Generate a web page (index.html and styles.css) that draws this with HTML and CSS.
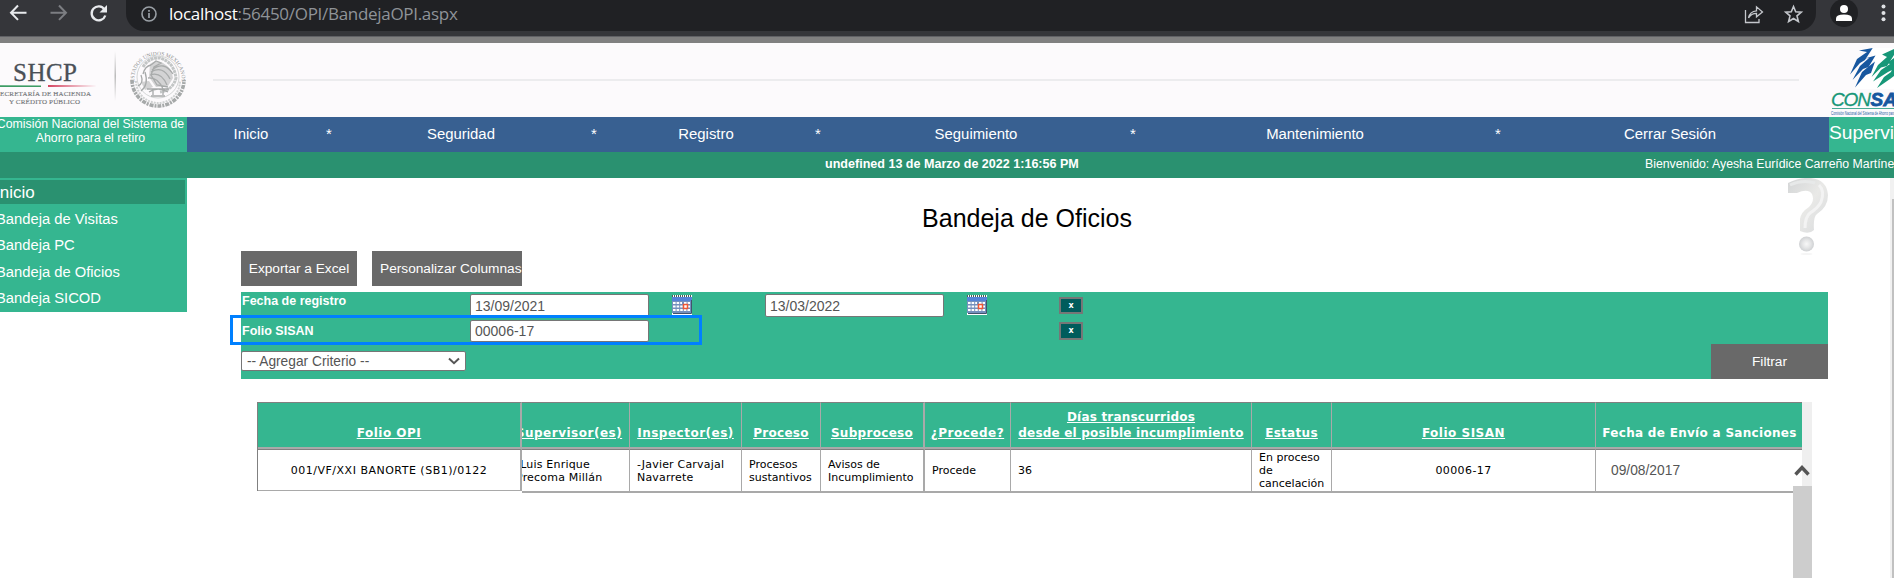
FILE: index.html
```html
<!DOCTYPE html>
<html lang="es">
<head>
<meta charset="utf-8">
<title>Bandeja de Oficios</title>
<link rel="stylesheet" href="styles.css">
</head>
<body>
<div class="browser">
  <svg class="nav-icons" width="126" height="36" viewBox="0 0 126 36" fill="none" stroke-width="2">
    <path d="M26.500 12.700H11.500M18 5.500L11 12.700L18 19.900" stroke="#e8eaed"/>
    <path d="M50.500 12.700H65.500M59 5.500L66 12.700L59 19.900" stroke="#7c7e82"/>
    <path d="M104.500 9.500A7 7 0 1 0 105.300 15.500" stroke="#e8eaed" stroke-width="2.300"/>
    <path d="M107 5V12.500H99.500Z" fill="#e8eaed"/>
  </svg>
  <div class="address">
    <svg class="info" width="16" height="16" viewBox="0 0 16 16"><circle cx="8" cy="8" r="7" fill="none" stroke="#9aa0a6" stroke-width="1.600"/><path d="M8 7V12M8 4V5.700" stroke="#9aa0a6" stroke-width="1.700"/></svg>
    <span class="url"><b>localhost</b>:56450/OPI/BandejaOPI.aspx</span>
    <svg class="page-actions" width="60" height="20" viewBox="0 0 60 20" fill="none" stroke="#c4c7cc" stroke-width="1.300">
      <path d="M1.500 6V18.500H15V15M4.500 14C5.500 9 9 7 12.500 6.800V2.800L18.500 8L12.500 12.800V9.300C9 9.300 6.500 10.500 4.500 14Z"/>
      <path d="M49.500 2.500L51.700 7.700L57.300 8.200L53 11.900L54.400 17.500L49.500 14.500L44.600 17.500L46 11.900L41.700 8.200L47.300 7.700Z" stroke-width="1.600"/>
    </svg>
  </div>
  <svg class="profile" width="64" height="36" viewBox="0 0 64 36"><circle cx="14" cy="13" r="14" fill="#202124"/><circle cx="14" cy="9" r="4" fill="#fff"/><path d="M6 21V18.500Q6 14.500 14 14.500T22 18.500V21Z" fill="#fff"/><g fill="#dfe1e4"><circle cx="53.500" cy="6.500" r="2"/><circle cx="53.500" cy="13" r="2"/><circle cx="53.500" cy="19.300" r="2"/></g></svg>
</div>
<header class="banner">
  <svg class="shcp" width="200" height="74" viewBox="0 0 200 74">
    <defs>
      <path id="ring" d="M134.500 39A23.700 23.700 0 1 1 181.500 39"/>
      <linearGradient id="fade" x1="0" y1="0" x2="0" y2="1"><stop offset="0" stop-color="#fcfafc"/><stop offset=".5" stop-color="#bbb"/><stop offset="1" stop-color="#fcfafc"/></linearGradient>
    </defs>
    <text class="shcp-name" x="13" y="38" textLength="64">SHCP</text>
    <path d="M0 42.300L41 42.600V43.900H0Z" fill="#3d9c64"/><path d="M48 42.100L97 43L48 44Z" fill="#d54561"/>
    <text class="shcp-sub" x="-4" y="53" textLength="95">SECRETARÍA DE HACIENDA</text>
    <text class="shcp-sub" x="9" y="61" textLength="71">Y CRÉDITO PÚBLICO</text>
    <rect x="114.500" y="8" width="1.500" height="50" fill="url(#fade)"/>
    <text class="seal-text"><textPath href="#ring" textLength="80">ESTADOS UNIDOS MEXICANOS</textPath></text>
    <g fill="none" stroke="#a6a9a9">
      <path d="M132 37A26 26 0 0 0 184 37" stroke-width="3.600" stroke-dasharray="4 1 2 1"/>
      <path d="M136 38A22 22 0 0 0 180 38" stroke="#d0d2d2" stroke-width="2" stroke-dasharray="2 1"/>
      <circle cx="158" cy="34" r="21" stroke="#d3d5d5"/>
      <path d="M143 24Q149 14 160 15Q174 19 176 35Q173 47 160 49" stroke="#c3c6c6" stroke-width="3" stroke-dasharray="3 .6"/>
      <path d="M151 22Q145 23 143 31M152 27Q164 17 173 31M151 29Q163 22 170 36M150 32Q161 28 167 42M148 35Q158 34 163 46M151 22L156 18L161 20L154 24L151 32L157 42L168 44" stroke-width="1.300"/>
      <path d="M141 32Q144 40 138 43M145 29Q149 42 141 48M147 46H169M149 49Q158 43 168 49M151 53H165M153 46V52M163 46V52" stroke-width="1.300"/>
    </g>
    <path d="M150 21Q156 16 163 20Q172 25 173 35L168 43L156 44L149 34ZM141 39L149 38L153 44L145 47Z" fill="#a9acac" opacity=".5"/>
  </svg>
  <div class="rule"></div>
  <svg class="consar" width="64" height="74" viewBox="0 0 64 74">
    <path d="M40 5H64V46H25L44 18Z" fill="#fff"/>
    <g fill="#17579f"><path d="M29 7.500L42.700 5L35 17L30 20L20 31.500L27 16L37 9Z"/><path d="M35 15.500L45.500 12.500L38.500 24L33 26L22.500 37L30 23L39 15Z"/><path d="M38 24L45 18.500L41 30L36 32L25 44.500L32 29Z"/></g>
    <g fill="#179778"><path d="M52 11.500L64 6V12L57 23L51 24.500L41.500 34L48 22L57 14Z"/><path d="M57 20L64 15V26L58 29L43 38.500L51 27L60 21Z"/><path d="M62 26L64 25V33L60 36L47 45L54 34L61 29Z"/></g>
    <text class="consar-name" x="1" y="63" textLength="40">CON</text><text class="consar-name dark" x="40.500" y="63">SA</text>
    <path d="M2 65.500H64" stroke="#48aa94"/>
    <text class="consar-sub" x="1" y="71.500" textLength="64" lengthAdjust="spacingAndGlyphs">Comisión Nacional del Sistema de Ahorro para</text>
  </svg>
</header>
<nav class="menu">
  <div class="agency"><span>Comisión Nacional del Sistema de</span><span>Ahorro para el retiro</span></div>
  <a>Inicio</a><i>*</i><a>Seguridad</a><i>*</i><a>Registro</a><i>*</i><a>Seguimiento</a><i>*</i><a>Mantenimiento</a><i>*</i><a>Cerrar Sesión</a>
  <div class="role">Supervi</div>
</nav>
<div class="status"><b>undefined 13 de Marzo de 2022 1:16:56 PM</b><span>Bienvenido: Ayesha Eurídice Carreño Martíne</span></div>
<div class="page">
  <aside class="side"><div class="side-title">Inicio</div><a>Bandeja de Visitas</a><a>Bandeja PC</a><a>Bandeja de Oficios</a><a>Bandeja SICOD</a></aside>
  <main class="main">
    <div class="title-row">
      <h1>Bandeja de Oficios</h1>
      <svg class="help" width="42" height="78" viewBox="0 0 42 78">
        <defs><linearGradient id="silver" x1="0" x2="1" y1="0" y2="1"><stop offset="0" stop-color="#d3d5d6"/><stop offset=".5" stop-color="#e9e9e7"/><stop offset="1" stop-color="#d8dadc"/></linearGradient><radialGradient id="ball"><stop offset="0" stop-color="#f8f8f8"/><stop offset=".55" stop-color="#e4e5e6"/><stop offset="1" stop-color="#cfd1d3"/></radialGradient></defs>
        <path d="M1 5Q14-1 24 0Q40 2 41 17Q41 29 30 36Q26 39 27 52Q22 57 13 53V41Q14 34 22 29Q28 23 25 16Q21 10 10 15L1 15Z" fill="url(#silver)"/>
        <path d="M32 7Q38 13 34 24Q31 30 23 35Q18 39 18 50" fill="none" stroke="#f3f3f3" stroke-width="3"/>
        <path d="M3 7Q16 1 28 5" fill="none" stroke="#e7e9e9" stroke-width="3"/>
        <circle cx="19.500" cy="66" r="7.500" fill="url(#ball)"/>
        <ellipse cx="19.500" cy="76" rx="6" ry="1" fill="#f5f5f5"/>
      </svg>
    </div>
    <div class="toolbar"><button class="grey">Exportar a Excel</button><button class="grey wide">Personalizar Columnas</button></div>
    <section class="filters">
      <div class="criterion dates">
        <label>Fecha de registro</label><input class="field" value="13/09/2021">
        <svg class="cal" width="20" height="20" viewBox="0 0 20 20"><path fill="#fff" d="M0 0H20V20H0Z"/><path fill="#5483d8" d="M0 2H20V6H0Z"/><path d="M0 1H20" stroke="#4e5d54" stroke-width="2" stroke-dasharray="1 1"/><path fill="#7490bd" d="M0 6H19V18H0Z"/><path d="M1 8H10M1 11.500H18M1 15H18M12 8H18" stroke="#fff" stroke-width="2.200" stroke-dasharray="2.600 1"/><path d="M11.500 9.500H15.500V13.500H11.500Z" stroke="#ef5735" stroke-width="1.500" fill="#fff"/><path d="M19.500 5V18.500H1" fill="none" stroke="#42536c"/></svg>
        <input class="field" value="13/03/2022">
        <svg class="cal" width="20" height="20" viewBox="0 0 20 20"><path fill="#fff" d="M0 0H20V20H0Z"/><path fill="#5483d8" d="M0 2H20V6H0Z"/><path d="M0 1H20" stroke="#4e5d54" stroke-width="2" stroke-dasharray="1 1"/><path fill="#7490bd" d="M0 6H19V18H0Z"/><path d="M1 8H10M1 11.500H18M1 15H18M12 8H18" stroke="#fff" stroke-width="2.200" stroke-dasharray="2.600 1"/><path d="M11.500 9.500H15.500V13.500H11.500Z" stroke="#ef5735" stroke-width="1.500" fill="#fff"/><path d="M19.500 5V18.500H1" fill="none" stroke="#42536c"/></svg>
        <button class="remove">x</button>
      </div>
      <div class="criterion folio"><label>Folio SISAN</label><input class="field" value="00006-17"><button class="remove">x</button></div>
      <div class="add-row">
        <div class="select">-- Agregar Criterio --<svg width="12" height="8" viewBox="0 0 12 8"><path d="M1 1.500L6 6.200L11 1.500" fill="none" stroke="#555" stroke-width="2"/></svg></div>
        <button class="grey filter">Filtrar</button>
      </div>
      <div class="highlight"></div>
    </section>
    <section class="grid">
      <table class="frozen"><tr><th class="wider"><u>Folio OPI</u></th></tr><tr><td>001/VF/XXI BANORTE (SB1)/0122</td></tr></table>
      <div class="scroller">
        <table class="data">
          <colgroup><col class="c1"><col class="c2"><col class="c3"><col class="c4"><col class="c5"><col class="c6"><col class="c7"><col class="c8"><col class="c9"></colgroup>
          <tr><th class="wider"><u>Supervisor(es)</u></th><th class="wider"><u>Inspector(es)</u></th><th><u>Proceso</u></th><th class="thick"><u>Subproceso</u></th><th class="wider"><u>¿Procede?</u></th><th class="days"><u>Días transcurridos<br>desde el posible incumplimiento</u></th><th><u>Estatus</u></th><th class="wider"><u>Folio SISAN</u></th><th>Fecha de Envío a Sanciones</th></tr>
          <tr><td class="person">-Luis Enrique<br>Precoma Millán</td><td class="person">-Javier Carvajal<br>Navarrete</td><td>Procesos<br>sustantivos</td><td class="thick">Avisos de<br>Incumplimiento</td><td>Procede</td><td>36</td><td>En proceso<br>de<br>cancelación</td><td class="center">00006-17</td><td class="sent">09/08/2017</td></tr>
        </table>
      </div>
      <div class="grid-bar"><svg class="up" width="16" height="12" viewBox="0 0 16 12"><path d="M1.500 10.500L8 3.500L14.500 10.500" fill="none" stroke="#555" stroke-width="3.400"/></svg><div class="thumb"></div></div>
    </section>
  </main>
  <div class="page-bar"></div>
</div>
</body>
</html>
```
FILE: styles.css
```css
* { box-sizing: border-box; }
body { margin: 0; width: 1894px; height: 578px; overflow: hidden; background: #fff; font-family: "Liberation Sans", Arial, sans-serif; color: #fff; }
svg { display: block; flex: none; }
button { border: 0; padding: 0; font: inherit; color: inherit; white-space: nowrap; }

.browser { display: flex; height: 37px; background: #35363a; border-bottom: 1px solid #606165; }
.address { display: flex; width: 1690px; height: 31px; padding-right: 48px; background: #202124; border-radius: 0 0 18px 18px; }
.info { margin: 6px 0 0 15px; }
.url { flex: 1; margin-left: 12px; font: 17px/28px "Open Sans", "Noto Sans", sans-serif; letter-spacing: -.3px; color: #8f9398; white-space: nowrap; }
.url b { font-weight: 400; color: #fff; }
.page-actions { margin-top: 4px; transform: translateX(36px); }
.profile { margin-left: 14px; }

.banner { display: flex; height: 80px; padding-top: 6px; background: linear-gradient(#808080 6px, #fcfafc 6px); }
.rule { width: 1586px; height: 2px; margin: 36px 31px 0 13px; background: #ececee; }
.shcp-name { font: 25px "Liberation Serif", serif; fill: #4a5057; stroke: #4a5057; stroke-width: .3px; }
.shcp-sub { font: 7px "Liberation Serif", serif; fill: #74777a; stroke: #74777a; stroke-width: .15px; }
.seal-text { font: 5.500px "Liberation Serif", serif; fill: #8f9292; }
.consar-name { font: italic 19px "Liberation Sans", sans-serif; fill: #179778; stroke: #179778; stroke-width: .3px; }
.dark { font-weight: bold; font-size: 19px; fill: #17579f; stroke: #17579f; stroke-width: .8px; }
.consar-sub { font: 5px "Liberation Sans", sans-serif; fill: #17579f; }

.menu { display: grid; grid-template-columns: 187px 128px 28px 236px 30px 194px 30px 286px 28px 336px 30px 314px 67px; height: 35px; background: #386091; font-size: 14.900px; line-height: 35px; text-align: center; }
.menu i { font-style: normal; }
.agency { display: flex; flex-direction: column; align-items: center; padding-right: 6px; background: #35b690; font-size: 12.300px; line-height: 14px; white-space: nowrap; overflow: hidden; }
.role { overflow: hidden; border-left: 2px solid #386091; background: #35b690; font-size: 19.200px; line-height: 32px; text-align: left; }
.status { display: grid; grid-template-columns: 825px 820px 249px; height: 26px; background: #2a9170; font-size: 12.300px; line-height: 24px; white-space: nowrap; overflow: hidden; }
.status b { grid-column: 2; font-size: 12.550px; }

.page { display: grid; grid-template-columns: 187px 1fr 4px; height: 400px; }
.side { height: 134px; padding: 2px 2px 0 0; background: #35b690; overflow: hidden; }
.side a, .side-title { display: block; height: 26.300px; text-indent: -4px; font-size: 14.750px; line-height: 26px; white-space: nowrap; }
.side .side-title { height: 24px; margin-bottom: 2px; background: #2a9170; font-size: 17px; line-height: 25px; text-indent: -5px; }
.page-bar { border-left: 2px solid #f1f1f1; background: linear-gradient(#f1f1f1 21px, #c1c1c1 21px); }

.main { padding-left: 54px; }
.title-row { display: grid; grid-template-columns: 1546px 42px; height: 73px; }
h1 { margin: 24px 0 0 26px; font-size: 25px; line-height: 32px; font-weight: 400; text-align: center; color: #000; }
.toolbar { display: flex; gap: 15px; height: 41px; }
.grey { width: 116px; height: 35px; background: #696969; font-size: 13.700px; }
.toolbar .wide { width: 150px; padding-left: 8px; text-align: left; }

.filters { position: relative; width: 1587px; height: 87px; background: #35b690; }
.criterion { display: grid; grid-template-columns: 229px 202px 93px 202px 92px 24px; height: 26px; padding-top: 2px; font-size: 12.500px; }
.criterion label { padding-left: 1px; font-weight: bold; line-height: 14px; }
.field { width: 179px; height: 23px; border: 1px solid #767676; border-radius: 2px; padding: 1px 4px; font: 14px "Liberation Sans", sans-serif; color: #555; background: #fff; }
.cal { margin-top: 1px; }
.remove { width: 24px; height: 17px; margin-top: 3px; background: #005c5c; border: 2px solid #767676; font: bold 8px/12px "DejaVu Sans", sans-serif; }
.folio .field { height: 22px; }
.folio label { line-height: 22px; }
.folio .remove { grid-column: 6; height: 18px; margin-top: 2px; }
.add-row { display: flex; justify-content: space-between; height: 35px; }
.select { display: flex; align-items: center; justify-content: space-between; width: 225px; height: 20px; margin-top: 7px; padding: 0 5px; border: 1px solid #767676; border-radius: 2px; background: #fff; color: #555; font-size: 13.750px; }
.filter { width: 117px; }
.highlight { position: absolute; left: -11px; top: 23px; width: 472px; height: 30px; border: 3px solid #0080ff; }

.grid { display: grid; grid-template-columns: 265px 1280px 10px; align-items: start; margin: 23px 0 0 16px; height: 176px; font-family: "DejaVu Sans", Verdana, sans-serif; }
.grid table { border-collapse: separate; border-spacing: 0; table-layout: fixed; }
.grid th { height: 47px; padding: 0 0 6px; vertical-align: bottom; border-top: 1px solid #808080; border-right: 1px solid #a9a9a9; border-bottom: 2px solid #a9a9a9; background: #35b690; font-size: 12px; line-height: 16px; letter-spacing: .3px; white-space: nowrap; }
.grid td { height: 44px; padding: 0 0 0 7px; border-top: 1px solid #808080; border-right: 1px solid #a9a9a9; border-bottom: 2px solid #a9a9a9; color: #000; font-size: 11px; line-height: 13px; letter-spacing: 0; white-space: nowrap; }
.grid .wider { letter-spacing: .5px; }
.grid .days { letter-spacing: .2px; }
.grid .person { letter-spacing: .2px; }
.frozen { width: 265px; border-left: 1px solid #808080; }
.grid .frozen th, .grid .frozen td { border-right-width: 2px; text-align: center; padding-left: 0; }
.grid .frozen td { height: 42px; border-bottom-width: 1px; letter-spacing: .5px; }
.scroller { overflow: hidden; height: 91px; }
.data { width: 1294px; margin-left: -13px; }
.grid .data .thick { border-right-width: 2px; }
.c1 { width: 121px; } .c2 { width: 112px; } .c3 { width: 79px; } .c4 { width: 104px; } .c5 { width: 86px; } .c6 { width: 241px; } .c7 { width: 80px; } .c8 { width: 264px; } .c9 { width: 207px; }
.grid .center { padding: 0; text-align: center; letter-spacing: .4px; }
.grid .sent { padding-left: 15px; font: 13.800px "Liberation Sans", sans-serif; color: #555; }
.grid .data tr > :last-child { border-right: 0; }
.grid-bar { position: relative; height: 176px; background: #efefef; }
.up { position: absolute; left: -8px; top: 62px; }
.thumb { position: absolute; left: -9px; right: 0; top: 84px; bottom: 0; background: #cdcdcd; }
```
